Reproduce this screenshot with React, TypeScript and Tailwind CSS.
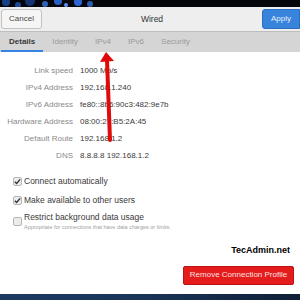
import React from "react";

const details = [
  ["Link speed", "1000 Mb/s"],
  ["IPv4 Address", "192.168.1.240"],
  ["IPv6 Address", "fe80::8b6:90c3:482:9e7b"],
  ["Hardware Address", "08:00:27:B5:2A:45"],
  ["Default Route", "192.168.1.2"],
  ["DNS", "8.8.8.8 192.168.1.2"],
];

const tabs = ["Details", "Identity", "IPv4", "IPv6", "Security"];

function Check({ on }: { on: boolean }) {
  return (
    <span className="flex h-[9px] w-[9px] shrink-0 items-center justify-center rounded-[2px] border border-[#b6b6b6] bg-[#ececec]">
      {on && (
        <svg width="7" height="7" viewBox="0 0 8 8">
          <path d="M1 4.2 3 6.2 7 1.6" fill="none" stroke="#2e3436" strokeWidth="1.6" />
        </svg>
      )}
    </span>
  );
}

export default function App() {
  return (
    <div
      className="relative flex h-[300px] w-[300px] flex-col overflow-hidden bg-white text-[8px] text-[#2e3436]"
      style={{ fontFamily: '"Liberation Sans", Arial, sans-serif' }}
    >
      {/* desktop behind the dialog */}
      <svg className="h-[7px] w-[300px] shrink-0" viewBox="0 0 300 7">
        <rect width="300" height="7" fill="#04060b" />
        <circle cx="6" cy="2" r="4" fill="#1d4fa8" opacity="0.8" />
        <circle cx="18" cy="5" r="3" fill="#2a66d0" opacity="0.7" />
        <circle cx="30" cy="1" r="5" fill="#1a3f88" opacity="0.8" />
        <circle cx="45" cy="4" r="3" fill="#3b7be0" opacity="0.8" />
        <circle cx="58" cy="1" r="4" fill="#2a5fc4" />
        <circle cx="66" cy="5" r="2" fill="#5a93ef" />
        <circle cx="78" cy="2" r="4" fill="#2b66d4" />
        <circle cx="90" cy="4" r="3" fill="#3570d8" opacity="0.8" />
      </svg>

      <div className="flex h-[25px] shrink-0 items-center justify-between border-b border-[#bdbdbd] bg-[#eeeeee] pl-[1px]">
        <button className="h-[20px] w-[41px] rounded-[3px] border border-[#c2c2c2] bg-[#f5f5f5] text-[8px] text-[#4a4a4a]">
          Cancel
        </button>
        <span className="text-[8.5px] text-[#2e3436]">Wired</span>
        <button className="h-[20px] w-[38px] rounded-l-[3px] border border-[#2a6fc2] bg-[#3883dc] text-[8px] text-[#e6f0fc]">
          Apply
        </button>
      </div>

      <div className="flex h-[20px] shrink-0 items-stretch gap-[1px] bg-[#d5d5d5] pl-[1px]">
        {tabs.map((t, i) => (
          <div
            key={t}
            className={
              i === 0
                ? "flex items-center border-b-2 border-[#3584e4] px-[8px] pt-[2px] font-bold text-[#3a3a3a]"
                : "flex items-center border-b-2 border-transparent px-[8px] pt-[2px] text-[#9a9a9a]"
            }
          >
            {t}
          </div>
        ))}
      </div>

      <div className="grid grid-cols-[73px_1fr] gap-x-[7px] pt-[10px] leading-[17px]">
        {details.map(([k, v]) => (
          <React.Fragment key={k}>
            <span className="text-right text-[#8a8a8a]">{k}</span>
            <span className="text-[#3a3a3a]">{v}</span>
          </React.Fragment>
        ))}
      </div>

      <div className="mt-[8px] flex flex-col pl-[13px] text-[8.5px] text-[#3a3a3a]">
        <label className="flex h-[18px] items-center gap-[2px]">
          <Check on />
          Connect automatically
        </label>
        <label className="mt-[1px] flex h-[18px] items-center gap-[2px]">
          <Check on />
          Make available to other users
        </label>
        <label className="mt-[3px] flex items-center gap-[2px]">
          <Check on={false} />
          <span className="flex flex-col">
            <span className="leading-[11px]">Restrict background data usage</span>
            <span className="text-[5.5px] leading-[8px] text-[#a0a0a0]">
              Appropriate for connections that have data charges or limits.
            </span>
          </span>
        </label>
      </div>

      <div className="mt-[13px] flex flex-col items-end pr-[6px]">
        <span className="pr-[4px] text-[9px] font-bold text-black">TecAdmin.net</span>
        <button className="mt-[8px] h-[19px] w-[111px] rounded-[2px] border border-[#b81414] bg-[#e51c1c] text-[8px] text-[#fbe0e0]">
          Remove Connection Profile
        </button>
      </div>

      <div className="mt-auto h-[6px] shrink-0 bg-gradient-to-r from-[#1c3a63] via-[#193457] to-[#101f36]" />

      {/* annotation arrow */}
      <svg className="pointer-events-none absolute left-0 top-0" width="300" height="300" viewBox="0 0 300 300">
        <path d="M110 140 107 60" stroke="#e00a0a" strokeWidth="4" strokeLinecap="round" />
        <polygon points="106,52 100,62 114,61" fill="#e00a0a" />
      </svg>
    </div>
  );
}
